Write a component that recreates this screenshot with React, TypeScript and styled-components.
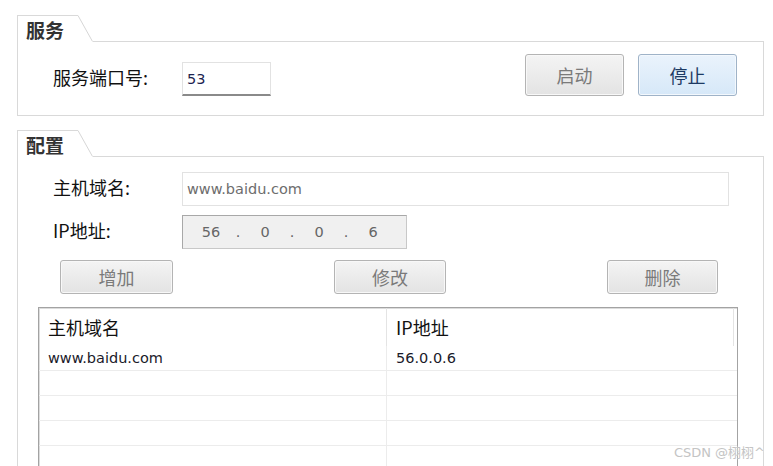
import React from "react";
import styled, { createGlobalStyle } from "styled-components";

const Global = createGlobalStyle`
  html, body { margin: 0; padding: 0; background: #fff; height: 466px; overflow: hidden; }
  #root { height: 466px; overflow: hidden; }
`;

const Page = styled.div`
  position: relative;
  height: 466px;
  overflow: hidden;
  box-sizing: border-box;
  padding: 15px 0 0 17px;
  display: flex;
  flex-direction: column;
  gap: 14px;
  font-family: "Noto Sans CJK SC", "DejaVu Sans", sans-serif;
  color: #111;
`;

const Group = styled.section`
  width: 747px;
  flex-shrink: 0;
  display: flex;
  flex-direction: column;
`;

const GroupHead = styled.div`
  display: flex;
  height: 27px;
`;

const Tab = styled.div`
  width: 61px;
  box-sizing: border-box;
  border-left: 1px solid #d9d9d9;
  border-top: 1px solid #d9d9d9;
  padding: 2px 0 0 8px;
  font-size: 19px;
  font-weight: 700;
  line-height: 24px;
  color: #333;
  white-space: nowrap;
`;

const Slant = styled.svg`
  display: block;
  flex-shrink: 0;
`;

const HeadRest = styled.div`
  flex: 1;
  box-sizing: border-box;
  border-bottom: 1px solid #d9d9d9;
`;

const GroupBody = styled.div<{ $pad: string }>`
  border: 1px solid #d9d9d9;
  border-top: none;
  padding: ${(p) => p.$pad};
  display: flex;
  flex-direction: column;
`;

const ServiceRow = styled.div`
  display: flex;
  align-items: flex-start;
  gap: 14px;
`;

const Field = styled.div<{ $mt: number }>`
  display: flex;
  align-items: center;
  height: 34px;
  margin-top: ${(p) => p.$mt}px;
`;

const Spacer = styled.div`
  flex: 1;
`;

const Label = styled.div`
  width: 164px;
  padding: 0 0 4px 35px;
  box-sizing: border-box;
  font-size: 18px;
  line-height: 24px;
  color: #111;
  white-space: nowrap;
`;

const Edit = styled.div<{ $w: number; $disabled?: boolean }>`
  width: ${(p) => p.$w}px;
  height: 34px;
  box-sizing: border-box;
  border: 1px solid #e2e2e2;
  border-bottom: ${(p) => (p.$disabled ? "1px solid #e2e2e2" : "2px solid #8a8a8a")};
  background: #fff;
  display: flex;
  align-items: center;
  padding: 0 4px;
  font-family: "DejaVu Sans", sans-serif;
  font-size: 14.5px;
  color: ${(p) => (p.$disabled ? "#6d6d6d" : "#1c2450")};
`;

const IpBox = styled.div`
  width: 225px;
  height: 34px;
  box-sizing: border-box;
  border: 1px solid #a8a8a8;
  border-right-color: #c8c8c8;
  border-bottom-color: #c8c8c8;
  background: #f0f0f0;
  display: flex;
  align-items: center;
  padding-left: 8px;
  font-family: "DejaVu Sans", sans-serif;
  font-size: 14.5px;
  color: #666;
`;

const Octet = styled.span`
  width: 40px;
  text-align: center;
`;

const Dot = styled.span`
  width: 14px;
  text-align: center;
`;

const Button = styled.div<{ $w: number; $h: number; $active?: boolean }>`
  width: ${(p) => p.$w}px;
  height: ${(p) => p.$h}px;
  box-sizing: border-box;
  border: 1px solid ${(p) => (p.$active ? "#9fb3c8" : "#b4b4b4")};
  border-radius: 3px;
  background: ${(p) =>
    p.$active
      ? "linear-gradient(#eaf3fc, #d6e8f8)"
      : "linear-gradient(#f4f4f4, #e3e3e3)"};
  box-shadow: inset 0 0 0 1px ${(p) => (p.$active ? "#f3f8fd" : "#f8f8f8")};
  display: flex;
  align-items: center;
  justify-content: center;
  font-size: 18px;
  color: ${(p) => (p.$active ? "#1d3a63" : "#7a7a7a")};
`;

const ButtonRow = styled.div`
  display: flex;
  justify-content: space-between;
  margin-top: 11px;
  padding: 0 45px 0 42px;
`;

const Table = styled.div`
  margin: 13px 0 0 20px;
  width: 700px;
  box-sizing: border-box;
  border: 1px solid #a3a3a3;
  box-shadow: inset 1px 1px 0 #dcdcdc;
  background: #fff;
`;

const HeaderRow = styled.div`
  display: grid;
  grid-template-columns: 348px 347px 1fr;
  height: 38px;
`;

const HeaderCell = styled.div<{ $sep?: boolean }>`
  border-right: ${(p) => (p.$sep ? "1px solid #e4e4e4" : "none")};
  padding-left: 9px;
  display: flex;
  align-items: center;
  font-size: 18px;
  color: #111;
`;

const Row = styled.div`
  display: grid;
  grid-template-columns: 348px 1fr;
  height: 25px;
  box-sizing: border-box;
  border-bottom: 1px solid #ececec;
`;

const Cell = styled.div<{ $sep?: boolean }>`
  border-right: ${(p) => (p.$sep ? "1px solid #ececec" : "none")};
  padding-left: 9px;
  display: flex;
  align-items: center;
  font-family: "DejaVu Sans", "Noto Sans CJK SC", sans-serif;
  font-size: 14.5px;
  color: #1a1a2a;
`;

const Watermark = styled.div`
  position: absolute;
  right: 8px;
  bottom: 5px;
  font-family: "DejaVu Sans", "Noto Sans CJK SC", sans-serif;
  font-size: 13px;
  color: #c4c4c4;
  text-shadow: 0 0 2px #fff;
`;

const GroupHeader = ({ title }: { title: string }) => (
  <GroupHead>
    <Tab>{title}</Tab>
    <Slant width="15" height="27" viewBox="0 0 15 27">
      <line x1="0" y1="0.5" x2="14.5" y2="26.5" stroke="#d6d6d6" strokeWidth="1" />
    </Slant>
    <HeadRest />
  </GroupHead>
);

const rows = [
  { host: "www.baidu.com", ip: "56.0.0.6" },
  { host: "", ip: "" },
  { host: "", ip: "" },
  { host: "", ip: "" },
  { host: "", ip: "" },
];

export default function App() {
  return (
    <>
      <Global />
      <Page>
        <Group>
          <GroupHeader title="服务" />
          <GroupBody $pad="12px 26px 19px 0">
            <ServiceRow>
              <Field $mt={8}>
                <Label>服务端口号:</Label>
                <Edit $w={89}>53</Edit>
              </Field>
              <Spacer />
              <Button $w={99} $h={42}>启动</Button>
              <Button $w={99} $h={42} $active>停止</Button>
            </ServiceRow>
          </GroupBody>
        </Group>

        <Group>
          <GroupHeader title="配置" />
          <GroupBody $pad="15px 0 0 0">
            <Field $mt={0}>
              <Label>主机域名:</Label>
              <Edit $w={547} $disabled>www.baidu.com</Edit>
            </Field>
            <Field $mt={9}>
              <Label>IP地址:</Label>
              <IpBox>
                <Octet>56</Octet>
                <Dot>.</Dot>
                <Octet>0</Octet>
                <Dot>.</Dot>
                <Octet>0</Octet>
                <Dot>.</Dot>
                <Octet>6</Octet>
              </IpBox>
            </Field>
            <ButtonRow>
              <Button $w={113} $h={34}>增加</Button>
              <Button $w={112} $h={34}>修改</Button>
              <Button $w={111} $h={34}>删除</Button>
            </ButtonRow>
            <Table>
              <HeaderRow>
                <HeaderCell $sep>主机域名</HeaderCell>
                <HeaderCell $sep>IP地址</HeaderCell>
                <HeaderCell />
              </HeaderRow>
              {rows.map((r, i) => (
                <Row key={i}>
                  <Cell $sep>{r.host}</Cell>
                  <Cell>{r.ip}</Cell>
                </Row>
              ))}
            </Table>
          </GroupBody>
        </Group>
        <Watermark>CSDN @栩栩^</Watermark>
      </Page>
    </>
  );
}
